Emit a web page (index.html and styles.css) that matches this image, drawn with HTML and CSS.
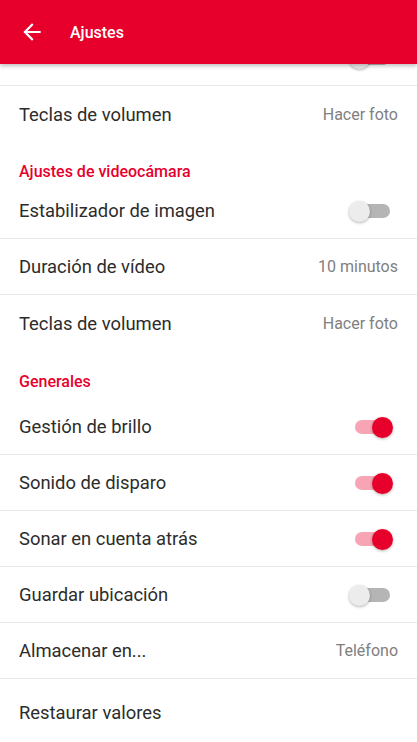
FILE: index.html
```html
<!DOCTYPE html>
<html lang="es">
<head>
    <meta charset="UTF-8">
    <meta name="viewport" content="width=device-width, initial-scale=1.0">
    <title>Ajustes</title>
    <link rel="stylesheet" href="styles.css">
</head>
<body>
    <!-- Toolbar -->
    <header class="toolbar">
        <svg class="back-icon" viewBox="0 0 24 24" width="26" height="26">
            <path d="M20 11H7.83l5.59-5.59L12 4l-8 8 8 8 1.41-1.41L7.83 13H20v-2z" fill="#fff"/>
        </svg>
        <span class="toolbar-title">Ajustes</span>
    </header>

    <!-- Settings list (scrolled, first row sits under the toolbar) -->
    <main class="settings">
        <div class="pref">
            <span class="pref-title">Modo silencio</span>
            <span class="switch"></span>
        </div>
        <div class="pref pref-end">
            <span class="pref-title">Teclas de volumen</span>
            <span class="pref-value">Hacer foto</span>
        </div>

        <div class="category">Ajustes de videocámara</div>
        <div class="pref">
            <span class="pref-title">Estabilizador de imagen</span>
            <span class="switch"></span>
        </div>
        <div class="pref">
            <span class="pref-title">Duración de vídeo</span>
            <span class="pref-value">10 minutos</span>
        </div>
        <div class="pref pref-end">
            <span class="pref-title">Teclas de volumen</span>
            <span class="pref-value">Hacer foto</span>
        </div>

        <div class="category category-spaced">Generales</div>
        <div class="pref">
            <span class="pref-title">Gestión de brillo</span>
            <span class="switch on"></span>
        </div>
        <div class="pref">
            <span class="pref-title">Sonido de disparo</span>
            <span class="switch on"></span>
        </div>
        <div class="pref">
            <span class="pref-title">Sonar en cuenta atrás</span>
            <span class="switch on"></span>
        </div>
        <div class="pref">
            <span class="pref-title">Guardar ubicación</span>
            <span class="switch"></span>
        </div>
        <div class="pref">
            <span class="pref-title">Almacenar en...</span>
            <span class="pref-value">Teléfono</span>
        </div>
        <div class="pref pref-end pref-last">
            <span class="pref-title">Restaurar valores</span>
        </div>
    </main>
</body>
</html>
```

FILE: styles.css
```css
body {
    font-family: Roboto, "Noto Sans", sans-serif;
    margin: 0;
    padding: 0;
    background-color: #fff;
    overflow: hidden;
}

.toolbar {
    position: relative;
    z-index: 1;
    height: 64px;
    box-sizing: border-box;
    background-color: #e8002d;
    color: #fff;
    display: flex;
    align-items: center;
    padding-left: 19px;
    box-shadow: 0 2px 4px rgba(0, 0, 0, 0.25);
}

.back-icon {
    display: block;
}

.toolbar-title {
    margin-left: 25px;
    font-size: 16px;
    font-weight: 500;
}

.settings {
    margin-top: -34px;
}

.pref {
    height: 56px;
    box-sizing: border-box;
    padding: 0 19px;
    display: flex;
    align-items: center;
    justify-content: space-between;
    border-bottom: 1px solid #e8e8e8;
}

.pref-end {
    border-bottom: none;
}

.pref-last {
    padding-top: 10px;
}

.pref-title {
    font-size: 18.4px;
    color: #2c2c2c;
}

.pref-value {
    font-size: 16px;
    color: #808080;
}

.category {
    height: 41px;
    box-sizing: border-box;
    padding: 20px 19px 0;
    font-size: 16px;
    line-height: 20px;
    font-weight: 500;
    color: #e8002d;
}

.category-spaced {
    height: 48px;
    padding-top: 21px;
}

/* Switch: track + thumb */
.switch {
    position: relative;
    width: 44px;
    height: 22px;
    margin-right: 5px;
}

.switch::before {
    content: "";
    position: absolute;
    left: 4px;
    right: 3px;
    top: 4px;
    height: 14px;
    border-radius: 7px;
    background-color: #b5b5b5;
}

.switch::after {
    content: "";
    position: absolute;
    left: 0;
    top: 1px;
    width: 21px;
    height: 21px;
    border-radius: 50%;
    background-color: #ececec;
    box-shadow: 0 1px 3px rgba(0, 0, 0, 0.3);
}

.switch.on::before {
    left: 6px;
    background-color: #f7a4b4;
}

.switch.on::after {
    left: auto;
    right: 0;
    background-color: #e8002d;
}
```
